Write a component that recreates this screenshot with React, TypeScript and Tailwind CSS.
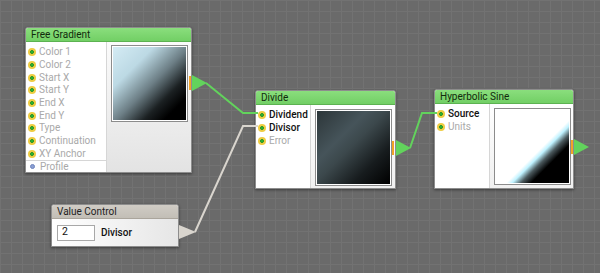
import type { ReactNode } from 'react';

const font = { fontFamily: 'Roboto, "Open Sans", sans-serif' };

interface PortRow {
  label: string;
  linked?: boolean;
}

function Dot() {
  return (
    <span className="w-[8px] h-[8px] rounded-full bg-[#efcd43] flex items-center justify-center shrink-0">
      <span className="w-[4px] h-[4px] rounded-full bg-[#2fbf35] border border-[#1f8f26]" />
    </span>
  );
}

function Ports({ rows }: { rows: PortRow[] }) {
  return (
    <div className="flex flex-col pt-[4px]">
      {rows.map(row => (
        <div key={row.label} className="h-[12.7px] flex items-center gap-[3px] pl-[2px]">
          <Dot />
          <span
            className={
              row.linked
                ? 'text-[10px] font-medium text-[#111] leading-none'
                : 'text-[10px] text-[#a9a9a9] leading-none'
            }
          >
            {row.label}
          </span>
        </div>
      ))}
    </div>
  );
}

function Preview({ gradient }: { gradient: string }) {
  return (
    <div className="w-[77px] h-[77px] border border-[#8c8c8c] bg-white p-px">
      <div className={`w-full h-full ${gradient}`} />
    </div>
  );
}

interface NodeProps {
  title: string;
  left: number;
  top: number;
  width: number;
  height: number;
  children: ReactNode;
  header?: string;
}

function NodeBox({ title, left, top, width, height, children, header }: NodeProps) {
  return (
    <div
      className="absolute flex flex-col rounded-t-[3px] border border-[#8d8d8d] bg-white shadow-[0_1px_3px_rgba(0,0,0,0.45)] overflow-hidden"
      style={{ left, top, width, height }}
    >
      <div
        className={`h-[14px] shrink-0 flex items-center px-[5px] border-b text-[10px] leading-none ${
          header ?? 'bg-gradient-to-b from-[#8ade7d] to-[#72cf65] border-[#5cb251] text-[#112a0c]'
        }`}
      >
        {title}
      </div>
      <div className="flex-1 flex min-h-0">{children}</div>
    </div>
  );
}

export default function App() {
  return (
    <div
      className="relative w-[600px] h-[273px] overflow-hidden bg-[#6a6a6a] bg-[linear-gradient(#727272_1px,transparent_1px),linear-gradient(90deg,#727272_1px,transparent_1px)] bg-size-[11px_11px]"
      style={font}
    >
      {/* Free Gradient */}
      <NodeBox title="Free Gradient" left={25} top={27} width={167} height={146}>
        <div className="w-[81px] border-r border-[#d6d6d6] flex flex-col">
          <Ports
            rows={[
              { label: 'Color 1' },
              { label: 'Color 2' },
              { label: 'Start X' },
              { label: 'Start Y' },
              { label: 'End X' },
              { label: 'End Y' },
              { label: 'Type' },
              { label: 'Continuation' },
              { label: 'XY Anchor' },
            ]}
          />
          <div className="border-t border-[#d6d6d6] h-[14px] flex items-center gap-[5px] pl-[4px]">
            <span className="w-[5px] h-[5px] rounded-full bg-[#8b9fd2] border border-[#6e84bd]" />
            <span className="text-[10px] text-[#a9a9a9] leading-none">Profile</span>
          </div>
        </div>
        <div className="flex-1 pl-[4px] pt-[3px] bg-gradient-to-b from-[#fbfbfb] to-[#e3e3e3]">
          <Preview gradient="bg-[linear-gradient(135deg,#d4ebf4_0%,#bcd9e4_28%,#6d7f86_52%,#1b2022_71%,#000_85%)]" />
        </div>
      </NodeBox>

      {/* Divide */}
      <NodeBox title="Divide" left={255} top={90} width={141} height={99}>
        <div className="w-[55px] border-r border-[#d6d6d6]">
          <Ports
            rows={[
              { label: 'Dividend', linked: true },
              { label: 'Divisor', linked: true },
              { label: 'Error' },
            ]}
          />
        </div>
        <div className="flex-1 pl-[4px] pt-[4px] bg-gradient-to-b from-[#ffffff] to-[#f0f0f0]">
          <Preview gradient="bg-[linear-gradient(135deg,#2c3639_0%,#46545a_34%,#3c484c_48%,#171c1e_74%,#000_100%)]" />
        </div>
      </NodeBox>

      {/* Hyperbolic Sine */}
      <NodeBox title="Hyperbolic Sine" left={434} top={89} width={140} height={100}>
        <div className="w-[55px] border-r border-[#d6d6d6]">
          <Ports rows={[{ label: 'Source', linked: true }, { label: 'Units' }]} />
        </div>
        <div className="flex-1 pl-[4px] pt-[4px] bg-gradient-to-b from-[#ffffff] to-[#f0f0f0]">
          <Preview gradient="bg-[linear-gradient(135deg,#fff_0%,#fff_57%,#bff2ff_61%,#4a585c_67%,#000_74%,#000_100%)]" />
        </div>
      </NodeBox>

      {/* Value Control */}
      <NodeBox
        title="Value Control"
        left={51}
        top={204}
        width={128}
        height={43}
        header="bg-gradient-to-b from-[#d0ccc5] to-[#c2beb6] border-[#aaa59c] text-[#1e1e1e]"
      >
        <div className="flex-1 flex items-center gap-[6px] pl-[5px] bg-gradient-to-r from-[#ffffff] to-[#e6e6e6]">
          <div className="w-[38px] h-[16px] border border-[#a8a8a8] bg-white flex items-center pl-[4px] text-[10.5px] text-[#111] leading-none">
            2
          </div>
          <span className="text-[10px] font-medium text-[#111] leading-none">Divisor</span>
        </div>
      </NodeBox>

      {/* wires and outputs */}
      <svg className="absolute inset-0 pointer-events-none" width={600} height={273}>
        <polyline points="206,83 243,113 258,113" fill="none" stroke="#62d35c" strokeWidth={2} />
        <polyline points="195,232 243,126 258,126" fill="none" stroke="#d9d5ce" strokeWidth={2} />
        <polyline points="410,148 422,113 437,113" fill="none" stroke="#62d35c" strokeWidth={2} />

        <rect x={189} y={76} width={2} height={14} fill="#f3a326" />
        <polygon points="192,75 207,83 192,91" fill="#62d35c" />

        <rect x={392} y={141} width={2} height={14} fill="#f3a326" />
        <polygon points="396,140 411,148 396,156" fill="#62d35c" />

        <rect x={571} y={140} width={2} height={14} fill="#f3a326" />
        <polygon points="574,139 589,147 574,155" fill="#62d35c" />

        <polygon points="179,225 196,232 179,239" fill="#d9d5ce" />
      </svg>
    </div>
  );
}
